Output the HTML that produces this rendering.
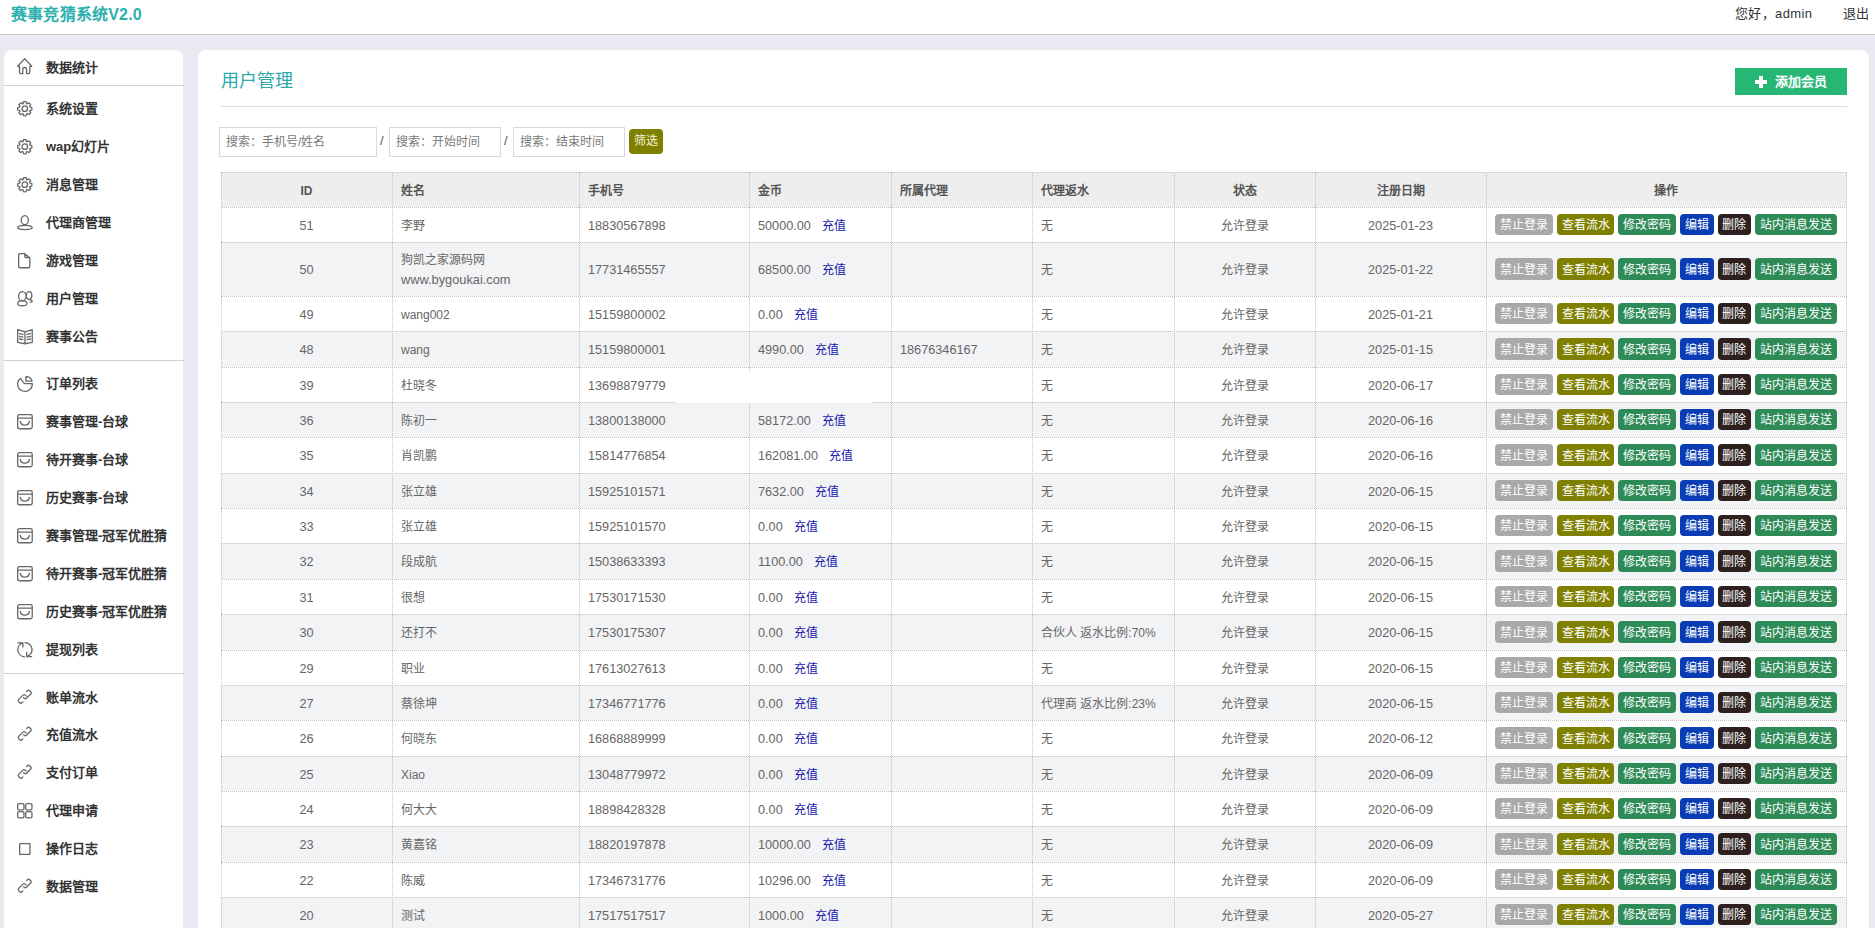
<!DOCTYPE html>
<html lang="zh-CN"><head><meta charset="utf-8"><title>用户管理</title>
<style>
*{box-sizing:border-box;margin:0;padding:0}
html,body{width:1875px;height:928px;overflow:hidden}
body{position:relative;background:#e9e9f2;font-family:"Liberation Sans",sans-serif;color:#333}
.abs{position:absolute}
.hdr{position:absolute;left:0;top:0;width:1875px;height:35px;background:#fff;border-bottom:1px solid #c9c9c9}
.logo{position:absolute;left:11px;top:4.6px;font-size:16px;letter-spacing:0.2px;font-weight:bold;color:#2bb0ae;line-height:20px;white-space:nowrap}
.hr-txt{position:absolute;top:5px;font-size:13px;letter-spacing:0.35px;color:#333;line-height:18px;white-space:nowrap}
.side{position:absolute;left:4px;top:50px;width:179px;height:900px;background:#fff;border-radius:8px 8px 0 0}
.si{position:absolute;left:4px;width:179px;height:20px}
.si svg{position:absolute;left:13px;top:0px}
.si span{position:absolute;left:42px;top:0;line-height:20px;font-size:13px;font-weight:bold;color:#333;white-space:nowrap}
.sep{position:absolute;left:4px;width:180px;height:1px;background:#cfd0d4}
.main{position:absolute;left:198px;top:50px;width:1671px;height:900px;background:#fff;border-radius:8px 8px 0 0}
.title{position:absolute;left:221px;top:70px;font-size:18px;color:#2ba9ab;line-height:22px;white-space:nowrap}
.addbtn{position:absolute;left:1735px;top:68px;width:112px;height:27px;background:#27b775;color:#fff;font-size:13px;font-weight:bold;line-height:27px;white-space:nowrap}
.hrline{position:absolute;left:221px;top:106px;width:1626px;height:1px;background:#dcdcdc}
.inp{position:absolute;top:127px;height:30px;border:1px solid #d6d9e0;background:#fff;font-size:12px;color:#7a7a7a;line-height:28px;padding-left:6px;white-space:nowrap}
.slash{position:absolute;top:132px;font-size:13px;color:#555;line-height:18px}
.filt{position:absolute;left:629px;top:129px;width:34px;height:25px;background:#808000;border-radius:4px;color:#f3f3d8;font-size:12px;line-height:25px;text-align:center}
.rowbg{position:absolute;left:221px;width:1626px}
.hl{position:absolute;left:221px;width:1626px;height:1px;border-top:1px dotted #c2c2c2}
.vl{position:absolute;width:1px;border-left:1px dotted #c2c2c2}
.c{position:absolute;display:flex;align-items:center;padding-top:3px;font-size:12px;color:#666;white-space:nowrap;line-height:19px}
.c.ctr{justify-content:center}
.c.l{padding-left:9px}
.num{font-size:12.7px}
.th{font-weight:bold;color:#555;font-size:12px}
.cz{color:#1616ad;font-size:12px;margin-left:11px}
.ops{position:absolute;display:flex;align-items:center;justify-content:center;gap:4px}
.b{display:block;height:21.5px;line-height:21.5px;padding:1.5px 4.8px 0;font-weight:500;border-radius:4px;color:#fff;font-size:12px;white-space:nowrap}
</style></head><body>

<div class="hdr"></div>
<div class="abs" style="left:0;top:35px;width:1875px;height:2px;background:#eeeef3"></div>
<div class="logo">赛事竞猜系统V2.0</div>
<div class="hr-txt" style="left:1735px">您好，admin</div>
<div class="hr-txt" style="left:1843px">退出</div>
<div class="side"></div>
<svg class="abs" style="left:17.3px;top:57.8px;overflow:visible" width="15.4" height="16.2" viewBox="0 0 15.4 16.2"><path fill="none" stroke="#676767" stroke-width="1.3" stroke-linecap="round" stroke-linejoin="round" d="M2.5 8.5 L0.65 8.3 L7.7 0.65 L14.75 8.3 L12.9 8.5 V14 Q12.9 15.55 11.5 15.55 H9.6 V11 Q9.6 9.5 7.7 9.5 Q5.8 9.5 5.8 11 V15.55 H3.9 Q2.5 15.55 2.5 14 Z"/></svg>
<div class="si" style="top:58px"><span>数据统计</span></div>
<div class="sep" style="top:85px"></div>
<svg class="abs" style="left:17.1px;top:101.1px;overflow:visible" width="15.6" height="15.4" viewBox="0 0 15.6 15.4"><path fill="none" stroke="#676767" stroke-width="1.3" stroke-linecap="round" stroke-linejoin="round" d="M6.13 2.56 L6.41 0.74 A7.1 7.1 0 0 1 9.19 0.74 L9.47 2.56 A5.4 5.4 0 0 1 10.25 2.89 L11.74 1.80 A7.1 7.1 0 0 1 13.70 3.76 L12.61 5.25 A5.4 5.4 0 0 1 12.94 6.03 L14.76 6.31 A7.1 7.1 0 0 1 14.76 9.09 L12.94 9.37 A5.4 5.4 0 0 1 12.61 10.15 L13.70 11.64 A7.1 7.1 0 0 1 11.74 13.60 L10.25 12.51 A5.4 5.4 0 0 1 9.47 12.84 L9.19 14.66 A7.1 7.1 0 0 1 6.41 14.66 L6.13 12.84 A5.4 5.4 0 0 1 5.35 12.51 L3.86 13.60 A7.1 7.1 0 0 1 1.90 11.64 L2.99 10.15 A5.4 5.4 0 0 1 2.66 9.37 L0.84 9.09 A7.1 7.1 0 0 1 0.84 6.31 L2.66 6.03 A5.4 5.4 0 0 1 2.99 5.25 L1.90 3.76 A7.1 7.1 0 0 1 3.86 1.80 L5.35 2.89 A5.4 5.4 0 0 1 6.13 2.56 Z"/><circle cx="7.8" cy="7.7" r="2.75" fill="none" stroke="#676767" stroke-width="1.3" stroke-linecap="round" stroke-linejoin="round"/></svg>
<div class="si" style="top:99px"><span>系统设置</span></div>
<svg class="abs" style="left:17.1px;top:139.1px;overflow:visible" width="15.6" height="15.4" viewBox="0 0 15.6 15.4"><path fill="none" stroke="#676767" stroke-width="1.3" stroke-linecap="round" stroke-linejoin="round" d="M6.13 2.56 L6.41 0.74 A7.1 7.1 0 0 1 9.19 0.74 L9.47 2.56 A5.4 5.4 0 0 1 10.25 2.89 L11.74 1.80 A7.1 7.1 0 0 1 13.70 3.76 L12.61 5.25 A5.4 5.4 0 0 1 12.94 6.03 L14.76 6.31 A7.1 7.1 0 0 1 14.76 9.09 L12.94 9.37 A5.4 5.4 0 0 1 12.61 10.15 L13.70 11.64 A7.1 7.1 0 0 1 11.74 13.60 L10.25 12.51 A5.4 5.4 0 0 1 9.47 12.84 L9.19 14.66 A7.1 7.1 0 0 1 6.41 14.66 L6.13 12.84 A5.4 5.4 0 0 1 5.35 12.51 L3.86 13.60 A7.1 7.1 0 0 1 1.90 11.64 L2.99 10.15 A5.4 5.4 0 0 1 2.66 9.37 L0.84 9.09 A7.1 7.1 0 0 1 0.84 6.31 L2.66 6.03 A5.4 5.4 0 0 1 2.99 5.25 L1.90 3.76 A7.1 7.1 0 0 1 3.86 1.80 L5.35 2.89 A5.4 5.4 0 0 1 6.13 2.56 Z"/><circle cx="7.8" cy="7.7" r="2.75" fill="none" stroke="#676767" stroke-width="1.3" stroke-linecap="round" stroke-linejoin="round"/></svg>
<div class="si" style="top:137px"><span>wap幻灯片</span></div>
<svg class="abs" style="left:17.1px;top:177.1px;overflow:visible" width="15.6" height="15.4" viewBox="0 0 15.6 15.4"><path fill="none" stroke="#676767" stroke-width="1.3" stroke-linecap="round" stroke-linejoin="round" d="M6.13 2.56 L6.41 0.74 A7.1 7.1 0 0 1 9.19 0.74 L9.47 2.56 A5.4 5.4 0 0 1 10.25 2.89 L11.74 1.80 A7.1 7.1 0 0 1 13.70 3.76 L12.61 5.25 A5.4 5.4 0 0 1 12.94 6.03 L14.76 6.31 A7.1 7.1 0 0 1 14.76 9.09 L12.94 9.37 A5.4 5.4 0 0 1 12.61 10.15 L13.70 11.64 A7.1 7.1 0 0 1 11.74 13.60 L10.25 12.51 A5.4 5.4 0 0 1 9.47 12.84 L9.19 14.66 A7.1 7.1 0 0 1 6.41 14.66 L6.13 12.84 A5.4 5.4 0 0 1 5.35 12.51 L3.86 13.60 A7.1 7.1 0 0 1 1.90 11.64 L2.99 10.15 A5.4 5.4 0 0 1 2.66 9.37 L0.84 9.09 A7.1 7.1 0 0 1 0.84 6.31 L2.66 6.03 A5.4 5.4 0 0 1 2.99 5.25 L1.90 3.76 A7.1 7.1 0 0 1 3.86 1.80 L5.35 2.89 A5.4 5.4 0 0 1 6.13 2.56 Z"/><circle cx="7.8" cy="7.7" r="2.75" fill="none" stroke="#676767" stroke-width="1.3" stroke-linecap="round" stroke-linejoin="round"/></svg>
<div class="si" style="top:175px"><span>消息管理</span></div>
<svg class="abs" style="left:17.1px;top:215.1px;overflow:visible" width="15.9" height="15.2" viewBox="0 0 15.9 15.2"><path fill="none" stroke="#676767" stroke-width="1.3" stroke-linecap="round" stroke-linejoin="round" d="M0.65 12.8 C0.65 9.6 15.25 9.6 15.25 12.8 C15.25 15.2 0.65 15.2 0.65 12.8 Z"/><ellipse cx="7.8" cy="5.15" rx="3.6" ry="4.5" fill="#fff" stroke="#676767" stroke-width="1.3" stroke-linecap="round" stroke-linejoin="round"/></svg>
<div class="si" style="top:213px"><span>代理商管理</span></div>
<svg class="abs" style="left:18.3px;top:253.1px;overflow:visible" width="12.5" height="15.4" viewBox="0 0 12.5 15.4"><path fill="none" stroke="#676767" stroke-width="1.3" stroke-linecap="round" stroke-linejoin="round" d="M0.65 1.8 Q0.65 0.65 1.8 0.65 H6.8 L11.85 4.9 V13.6 Q11.85 14.75 10.7 14.75 H1.8 Q0.65 14.75 0.65 13.6 Z M6.8 0.65 V3.6 Q6.8 4.5 7.7 4.5 H11.8"/></svg>
<div class="si" style="top:251px"><span>游戏管理</span></div>
<svg class="abs" style="left:17.1px;top:291.1px;overflow:visible" width="15.9" height="15.4" viewBox="0 0 15.9 15.4"><ellipse cx="12.1" cy="4.5" rx="2.75" ry="3.85" fill="none" stroke="#676767" stroke-width="1.3" stroke-linecap="round" stroke-linejoin="round"/><path fill="none" stroke="#676767" stroke-width="1.3" stroke-linecap="round" stroke-linejoin="round" d="M12.6 8.6 Q15.25 9.1 15.25 10.4 Q15.25 11.2 13.2 11.2"/><path fill="#fff" stroke="#676767" stroke-width="1.3" stroke-linecap="round" stroke-linejoin="round" d="M5.3 9.6 Q0.65 9.9 0.65 12.6 Q0.65 14.75 5.3 14.75 Q10 14.75 10 12.6 Q10 9.9 5.3 9.6 Z"/><ellipse cx="5.3" cy="5.2" rx="3.75" ry="4.55" fill="#fff" stroke="#676767" stroke-width="1.3" stroke-linecap="round" stroke-linejoin="round"/></svg>
<div class="si" style="top:289px"><span>用户管理</span></div>
<svg class="abs" style="left:17.1px;top:329.1px;overflow:visible" width="15.9" height="15.4" viewBox="0 0 15.9 15.4"><path fill="none" stroke="#676767" stroke-width="1.3" stroke-linecap="round" stroke-linejoin="round" d="M0.65 0.65 L7.95 2.9 L15.25 0.65 V13.4 L7.95 14.75 L0.65 13.4 Z M7.95 2.9 V14.75 M2.4 4.7 L5.9 5.4 M2.4 7.4 L5.9 8.1 M2.4 10 L5.9 10.7 M10 5.4 L13.5 4.7 M10 8.1 L13.5 7.4 M10 10.7 L13.5 10"/></svg>
<div class="si" style="top:327px"><span>赛事公告</span></div>
<div class="sep" style="top:360px"></div>
<svg class="abs" style="left:17.1px;top:375.9px;overflow:visible" width="15.9" height="15.9" viewBox="0 0 15.9 15.9"><path fill="none" stroke="#676767" stroke-width="1.3" stroke-linecap="round" stroke-linejoin="round" d="M3.4 2.4 L7.5 7.55 H15.25 A7.3 7.3 0 1 1 3.4 2.4 Z"/><path fill="none" stroke="#676767" stroke-width="1.3" stroke-linecap="round" stroke-linejoin="round" d="M8.9 0.7 V5.1 H15.2 A6.6 6.6 0 0 0 8.9 0.7 Z"/></svg>
<div class="si" style="top:374px"><span>订单列表</span></div>
<svg class="abs" style="left:17.1px;top:414.1px;overflow:visible" width="15.9" height="15.4" viewBox="0 0 15.9 15.4"><path fill="none" stroke="#676767" stroke-width="1.3" stroke-linecap="round" stroke-linejoin="round" d="M2.4 0.65 H13.5 Q15.25 0.65 15.25 2.4 V13 Q15.25 14.75 13.5 14.75 H2.4 Q0.65 14.75 0.65 13 V2.4 Q0.65 0.65 2.4 0.65 Z M0.65 4.2 H15.25 M3.3 7.4 C3.8 12.3 11.9 12.3 12.4 7.4"/></svg>
<div class="si" style="top:412px"><span>赛事管理-台球</span></div>
<svg class="abs" style="left:17.1px;top:452.1px;overflow:visible" width="15.9" height="15.4" viewBox="0 0 15.9 15.4"><path fill="none" stroke="#676767" stroke-width="1.3" stroke-linecap="round" stroke-linejoin="round" d="M2.4 0.65 H13.5 Q15.25 0.65 15.25 2.4 V13 Q15.25 14.75 13.5 14.75 H2.4 Q0.65 14.75 0.65 13 V2.4 Q0.65 0.65 2.4 0.65 Z M0.65 4.2 H15.25 M3.3 7.4 C3.8 12.3 11.9 12.3 12.4 7.4"/></svg>
<div class="si" style="top:450px"><span>待开赛事-台球</span></div>
<svg class="abs" style="left:17.1px;top:490.1px;overflow:visible" width="15.9" height="15.4" viewBox="0 0 15.9 15.4"><path fill="none" stroke="#676767" stroke-width="1.3" stroke-linecap="round" stroke-linejoin="round" d="M2.4 0.65 H13.5 Q15.25 0.65 15.25 2.4 V13 Q15.25 14.75 13.5 14.75 H2.4 Q0.65 14.75 0.65 13 V2.4 Q0.65 0.65 2.4 0.65 Z M0.65 4.2 H15.25 M3.3 7.4 C3.8 12.3 11.9 12.3 12.4 7.4"/></svg>
<div class="si" style="top:488px"><span>历史赛事-台球</span></div>
<svg class="abs" style="left:17.1px;top:528.1px;overflow:visible" width="15.9" height="15.4" viewBox="0 0 15.9 15.4"><path fill="none" stroke="#676767" stroke-width="1.3" stroke-linecap="round" stroke-linejoin="round" d="M2.4 0.65 H13.5 Q15.25 0.65 15.25 2.4 V13 Q15.25 14.75 13.5 14.75 H2.4 Q0.65 14.75 0.65 13 V2.4 Q0.65 0.65 2.4 0.65 Z M0.65 4.2 H15.25 M3.3 7.4 C3.8 12.3 11.9 12.3 12.4 7.4"/></svg>
<div class="si" style="top:526px"><span>赛事管理-冠军优胜猜</span></div>
<svg class="abs" style="left:17.1px;top:566.1px;overflow:visible" width="15.9" height="15.4" viewBox="0 0 15.9 15.4"><path fill="none" stroke="#676767" stroke-width="1.3" stroke-linecap="round" stroke-linejoin="round" d="M2.4 0.65 H13.5 Q15.25 0.65 15.25 2.4 V13 Q15.25 14.75 13.5 14.75 H2.4 Q0.65 14.75 0.65 13 V2.4 Q0.65 0.65 2.4 0.65 Z M0.65 4.2 H15.25 M3.3 7.4 C3.8 12.3 11.9 12.3 12.4 7.4"/></svg>
<div class="si" style="top:564px"><span>待开赛事-冠军优胜猜</span></div>
<svg class="abs" style="left:17.1px;top:604.1px;overflow:visible" width="15.9" height="15.4" viewBox="0 0 15.9 15.4"><path fill="none" stroke="#676767" stroke-width="1.3" stroke-linecap="round" stroke-linejoin="round" d="M2.4 0.65 H13.5 Q15.25 0.65 15.25 2.4 V13 Q15.25 14.75 13.5 14.75 H2.4 Q0.65 14.75 0.65 13 V2.4 Q0.65 0.65 2.4 0.65 Z M0.65 4.2 H15.25 M3.3 7.4 C3.8 12.3 11.9 12.3 12.4 7.4"/></svg>
<div class="si" style="top:602px"><span>历史赛事-冠军优胜猜</span></div>
<svg class="abs" style="left:17.1px;top:642.1px;overflow:visible" width="15.9" height="15.4" viewBox="0 0 15.9 15.4"><path fill="none" stroke="#676767" stroke-width="1.3" stroke-linecap="round" stroke-linejoin="round" d="M5.9 0.9 A7.1 7.1 0 0 0 7.6 14.79 M0.9 0.9 H5.9 V4.9 M8 0.6 A7.1 7.1 0 0 1 9.7 14.58 M9.7 10.5 V14.58 H14.7"/></svg>
<div class="si" style="top:640px"><span>提现列表</span></div>
<div class="sep" style="top:673px"></div>
<svg class="abs" style="left:17.1px;top:689.1px;overflow:visible" width="15.9" height="15.4" viewBox="0 0 15.9 15.4"><g transform="translate(7.9 7.9) rotate(-45)"><path fill="none" stroke="#676767" stroke-width="1.3" stroke-linecap="round" stroke-linejoin="round" d="M4.9 -2.6 H6.1 Q7.7 -2.6 7.7 -1 V0.5 Q7.7 2.1 6.1 2.1 H0.1 Q-1.5 2.1 -1.5 0.5 V-0.5 M-4.9 2.1 H-6.1 Q-7.7 2.1 -7.7 0.5 V-1 Q-7.7 -2.6 -6.1 -2.6 H-0.1 Q1.5 -2.6 1.5 -1 V0.2"/></g></svg>
<div class="si" style="top:688px"><span>账单流水</span></div>
<svg class="abs" style="left:17.1px;top:726.1px;overflow:visible" width="15.9" height="15.4" viewBox="0 0 15.9 15.4"><g transform="translate(7.9 7.9) rotate(-45)"><path fill="none" stroke="#676767" stroke-width="1.3" stroke-linecap="round" stroke-linejoin="round" d="M4.9 -2.6 H6.1 Q7.7 -2.6 7.7 -1 V0.5 Q7.7 2.1 6.1 2.1 H0.1 Q-1.5 2.1 -1.5 0.5 V-0.5 M-4.9 2.1 H-6.1 Q-7.7 2.1 -7.7 0.5 V-1 Q-7.7 -2.6 -6.1 -2.6 H-0.1 Q1.5 -2.6 1.5 -1 V0.2"/></g></svg>
<div class="si" style="top:725px"><span>充值流水</span></div>
<svg class="abs" style="left:17.1px;top:764.1px;overflow:visible" width="15.9" height="15.4" viewBox="0 0 15.9 15.4"><g transform="translate(7.9 7.9) rotate(-45)"><path fill="none" stroke="#676767" stroke-width="1.3" stroke-linecap="round" stroke-linejoin="round" d="M4.9 -2.6 H6.1 Q7.7 -2.6 7.7 -1 V0.5 Q7.7 2.1 6.1 2.1 H0.1 Q-1.5 2.1 -1.5 0.5 V-0.5 M-4.9 2.1 H-6.1 Q-7.7 2.1 -7.7 0.5 V-1 Q-7.7 -2.6 -6.1 -2.6 H-0.1 Q1.5 -2.6 1.5 -1 V0.2"/></g></svg>
<div class="si" style="top:763px"><span>支付订单</span></div>
<svg class="abs" style="left:17.2px;top:803.2px;overflow:visible" width="15.6" height="15.6" viewBox="0 0 15.6 15.6"><rect x="0.65" y="0.65" width="6.3" height="6.3" rx="1.4" fill="none" stroke="#676767" stroke-width="1.3" stroke-linecap="round" stroke-linejoin="round"/><rect x="8.65" y="0.65" width="6.3" height="6.3" rx="1.4" fill="none" stroke="#676767" stroke-width="1.3" stroke-linecap="round" stroke-linejoin="round"/><rect x="0.65" y="8.65" width="6.3" height="6.3" rx="1.4" fill="none" stroke="#676767" stroke-width="1.3" stroke-linecap="round" stroke-linejoin="round"/><rect x="8.65" y="8.65" width="6.3" height="6.3" rx="1.4" fill="none" stroke="#676767" stroke-width="1.3" stroke-linecap="round" stroke-linejoin="round"/></svg>
<div class="si" style="top:801px"><span>代理申请</span></div>
<svg class="abs" style="left:19.2px;top:843px;overflow:visible" width="11.6" height="12" viewBox="0 0 11.6 12"><rect x="0.65" y="0.65" width="10.3" height="10.7" fill="none" stroke="#676767" stroke-width="1.3" stroke-linecap="round" stroke-linejoin="round"/></svg>
<div class="si" style="top:839px"><span>操作日志</span></div>
<svg class="abs" style="left:17.1px;top:878.1px;overflow:visible" width="15.9" height="15.4" viewBox="0 0 15.9 15.4"><g transform="translate(7.9 7.9) rotate(-45)"><path fill="none" stroke="#676767" stroke-width="1.3" stroke-linecap="round" stroke-linejoin="round" d="M4.9 -2.6 H6.1 Q7.7 -2.6 7.7 -1 V0.5 Q7.7 2.1 6.1 2.1 H0.1 Q-1.5 2.1 -1.5 0.5 V-0.5 M-4.9 2.1 H-6.1 Q-7.7 2.1 -7.7 0.5 V-1 Q-7.7 -2.6 -6.1 -2.6 H-0.1 Q1.5 -2.6 1.5 -1 V0.2"/></g></svg>
<div class="si" style="top:877px"><span>数据管理</span></div>
<div class="main"></div>
<div class="title">用户管理</div>
<div class="addbtn"><svg class="abs" style="left:20px;top:8px" width="12" height="12" viewBox="0 0 12 12"><path d="M4 0H8V4H12V8H8V12H4V8H0V4H4Z" fill="#fff"/></svg><span class="abs" style="left:40px;top:0">添加会员</span></div>
<div class="hrline"></div>
<div class="inp" style="left:219px;width:158px">搜索：手机号/姓名</div>
<div class="slash" style="left:380px">/</div>
<div class="inp" style="left:389px;width:112px">搜索：开始时间</div>
<div class="slash" style="left:504px">/</div>
<div class="inp" style="left:513px;width:112px">搜索：结束时间</div>
<div class="filt">筛选</div>
<div class="rowbg" style="top:172px;height:35px;background:#eeeeee"></div>
<div class="rowbg" style="top:207px;height:35px;background:#ffffff"></div>
<div class="rowbg" style="top:242px;height:54px;background:#f2f3f5"></div>
<div class="rowbg" style="top:296px;height:35px;background:#ffffff"></div>
<div class="rowbg" style="top:331px;height:36px;background:#f2f3f5"></div>
<div class="rowbg" style="top:367px;height:35px;background:#ffffff"></div>
<div class="rowbg" style="top:402px;height:35px;background:#f2f3f5"></div>
<div class="rowbg" style="top:437px;height:36px;background:#ffffff"></div>
<div class="rowbg" style="top:473px;height:35px;background:#f2f3f5"></div>
<div class="rowbg" style="top:508px;height:35px;background:#ffffff"></div>
<div class="rowbg" style="top:543px;height:36px;background:#f2f3f5"></div>
<div class="rowbg" style="top:579px;height:35px;background:#ffffff"></div>
<div class="rowbg" style="top:614px;height:36px;background:#f2f3f5"></div>
<div class="rowbg" style="top:650px;height:35px;background:#ffffff"></div>
<div class="rowbg" style="top:685px;height:35px;background:#f2f3f5"></div>
<div class="rowbg" style="top:720px;height:36px;background:#ffffff"></div>
<div class="rowbg" style="top:756px;height:35px;background:#f2f3f5"></div>
<div class="rowbg" style="top:791px;height:35px;background:#ffffff"></div>
<div class="rowbg" style="top:826px;height:36px;background:#f2f3f5"></div>
<div class="rowbg" style="top:862px;height:35px;background:#ffffff"></div>
<div class="rowbg" style="top:897px;height:35px;background:#f2f3f5"></div>
<div class="c ctr" style="left:221px;top:172px;width:171px;height:35px"><span class="th">ID</span></div>
<div class="c l" style="left:392px;top:172px;width:187px;height:35px"><span class="th">姓名</span></div>
<div class="c l" style="left:579px;top:172px;width:170px;height:35px"><span class="th">手机号</span></div>
<div class="c l" style="left:749px;top:172px;width:142px;height:35px"><span class="th">金币</span></div>
<div class="c l" style="left:891px;top:172px;width:141px;height:35px"><span class="th">所属代理</span></div>
<div class="c l" style="left:1032px;top:172px;width:142px;height:35px"><span class="th">代理返水</span></div>
<div class="c ctr" style="left:1174px;top:172px;width:141px;height:35px"><span class="th">状态</span></div>
<div class="c ctr" style="left:1315px;top:172px;width:171px;height:35px"><span class="th">注册日期</span></div>
<div class="c ctr" style="left:1486px;top:172px;width:360px;height:35px"><span class="th">操作</span></div>
<div class="c ctr" style="left:221px;top:207px;width:171px;height:35px"><span class="num">51</span></div>
<div class="c l" style="left:392px;top:207px;width:187px;height:35px"><span>李野</span></div>
<div class="c l" style="left:579px;top:207px;width:170px;height:35px"><span class="num">18830567898</span></div>
<div class="c l" style="left:749px;top:207px;width:142px;height:35px"><span class="num">50000.00</span><span class="cz">充值</span></div>
<div class="c l" style="left:1032px;top:207px;width:142px;height:35px"><span>无</span></div>
<div class="c ctr" style="left:1174px;top:207px;width:141px;height:35px"><span>允许登录</span></div>
<div class="c ctr" style="left:1315px;top:207px;width:171px;height:35px"><span class="num">2025-01-23</span></div>
<div class="ops" style="left:1486px;top:207px;width:360px;height:35px"><span class="b" style="background:#a9a9a9">禁止登录</span><span class="b" style="background:#808000">查看流水</span><span class="b" style="background:#2e8b57">修改密码</span><span class="b" style="background:#0a3cb4">编辑</span><span class="b" style="background:#2d201f">删除</span><span class="b" style="background:#2e8b57">站内消息发送</span></div>
<div class="c ctr" style="left:221px;top:242px;width:171px;height:54px"><span class="num">50</span></div>
<div class="c l" style="left:392px;top:242px;width:187px;height:54px"><span>狗凯之家源码网<br><span style="font-size:12.8px">www.bygoukai.com</span></span></div>
<div class="c l" style="left:579px;top:242px;width:170px;height:54px"><span class="num">17731465557</span></div>
<div class="c l" style="left:749px;top:242px;width:142px;height:54px"><span class="num">68500.00</span><span class="cz">充值</span></div>
<div class="c l" style="left:1032px;top:242px;width:142px;height:54px"><span>无</span></div>
<div class="c ctr" style="left:1174px;top:242px;width:141px;height:54px"><span>允许登录</span></div>
<div class="c ctr" style="left:1315px;top:242px;width:171px;height:54px"><span class="num">2025-01-22</span></div>
<div class="ops" style="left:1486px;top:242px;width:360px;height:54px"><span class="b" style="background:#a9a9a9">禁止登录</span><span class="b" style="background:#808000">查看流水</span><span class="b" style="background:#2e8b57">修改密码</span><span class="b" style="background:#0a3cb4">编辑</span><span class="b" style="background:#2d201f">删除</span><span class="b" style="background:#2e8b57">站内消息发送</span></div>
<div class="c ctr" style="left:221px;top:296px;width:171px;height:35px"><span class="num">49</span></div>
<div class="c l" style="left:392px;top:296px;width:187px;height:35px"><span>wang002</span></div>
<div class="c l" style="left:579px;top:296px;width:170px;height:35px"><span class="num">15159800002</span></div>
<div class="c l" style="left:749px;top:296px;width:142px;height:35px"><span class="num">0.00</span><span class="cz">充值</span></div>
<div class="c l" style="left:1032px;top:296px;width:142px;height:35px"><span>无</span></div>
<div class="c ctr" style="left:1174px;top:296px;width:141px;height:35px"><span>允许登录</span></div>
<div class="c ctr" style="left:1315px;top:296px;width:171px;height:35px"><span class="num">2025-01-21</span></div>
<div class="ops" style="left:1486px;top:296px;width:360px;height:35px"><span class="b" style="background:#a9a9a9">禁止登录</span><span class="b" style="background:#808000">查看流水</span><span class="b" style="background:#2e8b57">修改密码</span><span class="b" style="background:#0a3cb4">编辑</span><span class="b" style="background:#2d201f">删除</span><span class="b" style="background:#2e8b57">站内消息发送</span></div>
<div class="c ctr" style="left:221px;top:331px;width:171px;height:36px"><span class="num">48</span></div>
<div class="c l" style="left:392px;top:331px;width:187px;height:36px"><span>wang</span></div>
<div class="c l" style="left:579px;top:331px;width:170px;height:36px"><span class="num">15159800001</span></div>
<div class="c l" style="left:749px;top:331px;width:142px;height:36px"><span class="num">4990.00</span><span class="cz">充值</span></div>
<div class="c l" style="left:891px;top:331px;width:141px;height:36px"><span class="num">18676346167</span></div>
<div class="c l" style="left:1032px;top:331px;width:142px;height:36px"><span>无</span></div>
<div class="c ctr" style="left:1174px;top:331px;width:141px;height:36px"><span>允许登录</span></div>
<div class="c ctr" style="left:1315px;top:331px;width:171px;height:36px"><span class="num">2025-01-15</span></div>
<div class="ops" style="left:1486px;top:331px;width:360px;height:36px"><span class="b" style="background:#a9a9a9">禁止登录</span><span class="b" style="background:#808000">查看流水</span><span class="b" style="background:#2e8b57">修改密码</span><span class="b" style="background:#0a3cb4">编辑</span><span class="b" style="background:#2d201f">删除</span><span class="b" style="background:#2e8b57">站内消息发送</span></div>
<div class="c ctr" style="left:221px;top:367px;width:171px;height:35px"><span class="num">39</span></div>
<div class="c l" style="left:392px;top:367px;width:187px;height:35px"><span>杜晓冬</span></div>
<div class="c l" style="left:579px;top:367px;width:170px;height:35px"><span class="num">13698879779</span></div>
<div class="c l" style="left:1032px;top:367px;width:142px;height:35px"><span>无</span></div>
<div class="c ctr" style="left:1174px;top:367px;width:141px;height:35px"><span>允许登录</span></div>
<div class="c ctr" style="left:1315px;top:367px;width:171px;height:35px"><span class="num">2020-06-17</span></div>
<div class="ops" style="left:1486px;top:367px;width:360px;height:35px"><span class="b" style="background:#a9a9a9">禁止登录</span><span class="b" style="background:#808000">查看流水</span><span class="b" style="background:#2e8b57">修改密码</span><span class="b" style="background:#0a3cb4">编辑</span><span class="b" style="background:#2d201f">删除</span><span class="b" style="background:#2e8b57">站内消息发送</span></div>
<div class="c ctr" style="left:221px;top:402px;width:171px;height:35px"><span class="num">36</span></div>
<div class="c l" style="left:392px;top:402px;width:187px;height:35px"><span>陈初一</span></div>
<div class="c l" style="left:579px;top:402px;width:170px;height:35px"><span class="num">13800138000</span></div>
<div class="c l" style="left:749px;top:402px;width:142px;height:35px"><span class="num">58172.00</span><span class="cz">充值</span></div>
<div class="c l" style="left:1032px;top:402px;width:142px;height:35px"><span>无</span></div>
<div class="c ctr" style="left:1174px;top:402px;width:141px;height:35px"><span>允许登录</span></div>
<div class="c ctr" style="left:1315px;top:402px;width:171px;height:35px"><span class="num">2020-06-16</span></div>
<div class="ops" style="left:1486px;top:402px;width:360px;height:35px"><span class="b" style="background:#a9a9a9">禁止登录</span><span class="b" style="background:#808000">查看流水</span><span class="b" style="background:#2e8b57">修改密码</span><span class="b" style="background:#0a3cb4">编辑</span><span class="b" style="background:#2d201f">删除</span><span class="b" style="background:#2e8b57">站内消息发送</span></div>
<div class="c ctr" style="left:221px;top:437px;width:171px;height:36px"><span class="num">35</span></div>
<div class="c l" style="left:392px;top:437px;width:187px;height:36px"><span>肖凯鹏</span></div>
<div class="c l" style="left:579px;top:437px;width:170px;height:36px"><span class="num">15814776854</span></div>
<div class="c l" style="left:749px;top:437px;width:142px;height:36px"><span class="num">162081.00</span><span class="cz">充值</span></div>
<div class="c l" style="left:1032px;top:437px;width:142px;height:36px"><span>无</span></div>
<div class="c ctr" style="left:1174px;top:437px;width:141px;height:36px"><span>允许登录</span></div>
<div class="c ctr" style="left:1315px;top:437px;width:171px;height:36px"><span class="num">2020-06-16</span></div>
<div class="ops" style="left:1486px;top:437px;width:360px;height:36px"><span class="b" style="background:#a9a9a9">禁止登录</span><span class="b" style="background:#808000">查看流水</span><span class="b" style="background:#2e8b57">修改密码</span><span class="b" style="background:#0a3cb4">编辑</span><span class="b" style="background:#2d201f">删除</span><span class="b" style="background:#2e8b57">站内消息发送</span></div>
<div class="c ctr" style="left:221px;top:473px;width:171px;height:35px"><span class="num">34</span></div>
<div class="c l" style="left:392px;top:473px;width:187px;height:35px"><span>张立雄</span></div>
<div class="c l" style="left:579px;top:473px;width:170px;height:35px"><span class="num">15925101571</span></div>
<div class="c l" style="left:749px;top:473px;width:142px;height:35px"><span class="num">7632.00</span><span class="cz">充值</span></div>
<div class="c l" style="left:1032px;top:473px;width:142px;height:35px"><span>无</span></div>
<div class="c ctr" style="left:1174px;top:473px;width:141px;height:35px"><span>允许登录</span></div>
<div class="c ctr" style="left:1315px;top:473px;width:171px;height:35px"><span class="num">2020-06-15</span></div>
<div class="ops" style="left:1486px;top:473px;width:360px;height:35px"><span class="b" style="background:#a9a9a9">禁止登录</span><span class="b" style="background:#808000">查看流水</span><span class="b" style="background:#2e8b57">修改密码</span><span class="b" style="background:#0a3cb4">编辑</span><span class="b" style="background:#2d201f">删除</span><span class="b" style="background:#2e8b57">站内消息发送</span></div>
<div class="c ctr" style="left:221px;top:508px;width:171px;height:35px"><span class="num">33</span></div>
<div class="c l" style="left:392px;top:508px;width:187px;height:35px"><span>张立雄</span></div>
<div class="c l" style="left:579px;top:508px;width:170px;height:35px"><span class="num">15925101570</span></div>
<div class="c l" style="left:749px;top:508px;width:142px;height:35px"><span class="num">0.00</span><span class="cz">充值</span></div>
<div class="c l" style="left:1032px;top:508px;width:142px;height:35px"><span>无</span></div>
<div class="c ctr" style="left:1174px;top:508px;width:141px;height:35px"><span>允许登录</span></div>
<div class="c ctr" style="left:1315px;top:508px;width:171px;height:35px"><span class="num">2020-06-15</span></div>
<div class="ops" style="left:1486px;top:508px;width:360px;height:35px"><span class="b" style="background:#a9a9a9">禁止登录</span><span class="b" style="background:#808000">查看流水</span><span class="b" style="background:#2e8b57">修改密码</span><span class="b" style="background:#0a3cb4">编辑</span><span class="b" style="background:#2d201f">删除</span><span class="b" style="background:#2e8b57">站内消息发送</span></div>
<div class="c ctr" style="left:221px;top:543px;width:171px;height:36px"><span class="num">32</span></div>
<div class="c l" style="left:392px;top:543px;width:187px;height:36px"><span>段成航</span></div>
<div class="c l" style="left:579px;top:543px;width:170px;height:36px"><span class="num">15038633393</span></div>
<div class="c l" style="left:749px;top:543px;width:142px;height:36px"><span class="num">1100.00</span><span class="cz">充值</span></div>
<div class="c l" style="left:1032px;top:543px;width:142px;height:36px"><span>无</span></div>
<div class="c ctr" style="left:1174px;top:543px;width:141px;height:36px"><span>允许登录</span></div>
<div class="c ctr" style="left:1315px;top:543px;width:171px;height:36px"><span class="num">2020-06-15</span></div>
<div class="ops" style="left:1486px;top:543px;width:360px;height:36px"><span class="b" style="background:#a9a9a9">禁止登录</span><span class="b" style="background:#808000">查看流水</span><span class="b" style="background:#2e8b57">修改密码</span><span class="b" style="background:#0a3cb4">编辑</span><span class="b" style="background:#2d201f">删除</span><span class="b" style="background:#2e8b57">站内消息发送</span></div>
<div class="c ctr" style="left:221px;top:579px;width:171px;height:35px"><span class="num">31</span></div>
<div class="c l" style="left:392px;top:579px;width:187px;height:35px"><span>很想</span></div>
<div class="c l" style="left:579px;top:579px;width:170px;height:35px"><span class="num">17530171530</span></div>
<div class="c l" style="left:749px;top:579px;width:142px;height:35px"><span class="num">0.00</span><span class="cz">充值</span></div>
<div class="c l" style="left:1032px;top:579px;width:142px;height:35px"><span>无</span></div>
<div class="c ctr" style="left:1174px;top:579px;width:141px;height:35px"><span>允许登录</span></div>
<div class="c ctr" style="left:1315px;top:579px;width:171px;height:35px"><span class="num">2020-06-15</span></div>
<div class="ops" style="left:1486px;top:579px;width:360px;height:35px"><span class="b" style="background:#a9a9a9">禁止登录</span><span class="b" style="background:#808000">查看流水</span><span class="b" style="background:#2e8b57">修改密码</span><span class="b" style="background:#0a3cb4">编辑</span><span class="b" style="background:#2d201f">删除</span><span class="b" style="background:#2e8b57">站内消息发送</span></div>
<div class="c ctr" style="left:221px;top:614px;width:171px;height:36px"><span class="num">30</span></div>
<div class="c l" style="left:392px;top:614px;width:187px;height:36px"><span>还打不</span></div>
<div class="c l" style="left:579px;top:614px;width:170px;height:36px"><span class="num">17530175307</span></div>
<div class="c l" style="left:749px;top:614px;width:142px;height:36px"><span class="num">0.00</span><span class="cz">充值</span></div>
<div class="c l" style="left:1032px;top:614px;width:142px;height:36px"><span>合伙人 返水比例:70%</span></div>
<div class="c ctr" style="left:1174px;top:614px;width:141px;height:36px"><span>允许登录</span></div>
<div class="c ctr" style="left:1315px;top:614px;width:171px;height:36px"><span class="num">2020-06-15</span></div>
<div class="ops" style="left:1486px;top:614px;width:360px;height:36px"><span class="b" style="background:#a9a9a9">禁止登录</span><span class="b" style="background:#808000">查看流水</span><span class="b" style="background:#2e8b57">修改密码</span><span class="b" style="background:#0a3cb4">编辑</span><span class="b" style="background:#2d201f">删除</span><span class="b" style="background:#2e8b57">站内消息发送</span></div>
<div class="c ctr" style="left:221px;top:650px;width:171px;height:35px"><span class="num">29</span></div>
<div class="c l" style="left:392px;top:650px;width:187px;height:35px"><span>职业</span></div>
<div class="c l" style="left:579px;top:650px;width:170px;height:35px"><span class="num">17613027613</span></div>
<div class="c l" style="left:749px;top:650px;width:142px;height:35px"><span class="num">0.00</span><span class="cz">充值</span></div>
<div class="c l" style="left:1032px;top:650px;width:142px;height:35px"><span>无</span></div>
<div class="c ctr" style="left:1174px;top:650px;width:141px;height:35px"><span>允许登录</span></div>
<div class="c ctr" style="left:1315px;top:650px;width:171px;height:35px"><span class="num">2020-06-15</span></div>
<div class="ops" style="left:1486px;top:650px;width:360px;height:35px"><span class="b" style="background:#a9a9a9">禁止登录</span><span class="b" style="background:#808000">查看流水</span><span class="b" style="background:#2e8b57">修改密码</span><span class="b" style="background:#0a3cb4">编辑</span><span class="b" style="background:#2d201f">删除</span><span class="b" style="background:#2e8b57">站内消息发送</span></div>
<div class="c ctr" style="left:221px;top:685px;width:171px;height:35px"><span class="num">27</span></div>
<div class="c l" style="left:392px;top:685px;width:187px;height:35px"><span>蔡徐坤</span></div>
<div class="c l" style="left:579px;top:685px;width:170px;height:35px"><span class="num">17346771776</span></div>
<div class="c l" style="left:749px;top:685px;width:142px;height:35px"><span class="num">0.00</span><span class="cz">充值</span></div>
<div class="c l" style="left:1032px;top:685px;width:142px;height:35px"><span>代理商 返水比例:23%</span></div>
<div class="c ctr" style="left:1174px;top:685px;width:141px;height:35px"><span>允许登录</span></div>
<div class="c ctr" style="left:1315px;top:685px;width:171px;height:35px"><span class="num">2020-06-15</span></div>
<div class="ops" style="left:1486px;top:685px;width:360px;height:35px"><span class="b" style="background:#a9a9a9">禁止登录</span><span class="b" style="background:#808000">查看流水</span><span class="b" style="background:#2e8b57">修改密码</span><span class="b" style="background:#0a3cb4">编辑</span><span class="b" style="background:#2d201f">删除</span><span class="b" style="background:#2e8b57">站内消息发送</span></div>
<div class="c ctr" style="left:221px;top:720px;width:171px;height:36px"><span class="num">26</span></div>
<div class="c l" style="left:392px;top:720px;width:187px;height:36px"><span>何晓东</span></div>
<div class="c l" style="left:579px;top:720px;width:170px;height:36px"><span class="num">16868889999</span></div>
<div class="c l" style="left:749px;top:720px;width:142px;height:36px"><span class="num">0.00</span><span class="cz">充值</span></div>
<div class="c l" style="left:1032px;top:720px;width:142px;height:36px"><span>无</span></div>
<div class="c ctr" style="left:1174px;top:720px;width:141px;height:36px"><span>允许登录</span></div>
<div class="c ctr" style="left:1315px;top:720px;width:171px;height:36px"><span class="num">2020-06-12</span></div>
<div class="ops" style="left:1486px;top:720px;width:360px;height:36px"><span class="b" style="background:#a9a9a9">禁止登录</span><span class="b" style="background:#808000">查看流水</span><span class="b" style="background:#2e8b57">修改密码</span><span class="b" style="background:#0a3cb4">编辑</span><span class="b" style="background:#2d201f">删除</span><span class="b" style="background:#2e8b57">站内消息发送</span></div>
<div class="c ctr" style="left:221px;top:756px;width:171px;height:35px"><span class="num">25</span></div>
<div class="c l" style="left:392px;top:756px;width:187px;height:35px"><span>Xiao</span></div>
<div class="c l" style="left:579px;top:756px;width:170px;height:35px"><span class="num">13048779972</span></div>
<div class="c l" style="left:749px;top:756px;width:142px;height:35px"><span class="num">0.00</span><span class="cz">充值</span></div>
<div class="c l" style="left:1032px;top:756px;width:142px;height:35px"><span>无</span></div>
<div class="c ctr" style="left:1174px;top:756px;width:141px;height:35px"><span>允许登录</span></div>
<div class="c ctr" style="left:1315px;top:756px;width:171px;height:35px"><span class="num">2020-06-09</span></div>
<div class="ops" style="left:1486px;top:756px;width:360px;height:35px"><span class="b" style="background:#a9a9a9">禁止登录</span><span class="b" style="background:#808000">查看流水</span><span class="b" style="background:#2e8b57">修改密码</span><span class="b" style="background:#0a3cb4">编辑</span><span class="b" style="background:#2d201f">删除</span><span class="b" style="background:#2e8b57">站内消息发送</span></div>
<div class="c ctr" style="left:221px;top:791px;width:171px;height:35px"><span class="num">24</span></div>
<div class="c l" style="left:392px;top:791px;width:187px;height:35px"><span>何大大</span></div>
<div class="c l" style="left:579px;top:791px;width:170px;height:35px"><span class="num">18898428328</span></div>
<div class="c l" style="left:749px;top:791px;width:142px;height:35px"><span class="num">0.00</span><span class="cz">充值</span></div>
<div class="c l" style="left:1032px;top:791px;width:142px;height:35px"><span>无</span></div>
<div class="c ctr" style="left:1174px;top:791px;width:141px;height:35px"><span>允许登录</span></div>
<div class="c ctr" style="left:1315px;top:791px;width:171px;height:35px"><span class="num">2020-06-09</span></div>
<div class="ops" style="left:1486px;top:791px;width:360px;height:35px"><span class="b" style="background:#a9a9a9">禁止登录</span><span class="b" style="background:#808000">查看流水</span><span class="b" style="background:#2e8b57">修改密码</span><span class="b" style="background:#0a3cb4">编辑</span><span class="b" style="background:#2d201f">删除</span><span class="b" style="background:#2e8b57">站内消息发送</span></div>
<div class="c ctr" style="left:221px;top:826px;width:171px;height:36px"><span class="num">23</span></div>
<div class="c l" style="left:392px;top:826px;width:187px;height:36px"><span>黄嘉铭</span></div>
<div class="c l" style="left:579px;top:826px;width:170px;height:36px"><span class="num">18820197878</span></div>
<div class="c l" style="left:749px;top:826px;width:142px;height:36px"><span class="num">10000.00</span><span class="cz">充值</span></div>
<div class="c l" style="left:1032px;top:826px;width:142px;height:36px"><span>无</span></div>
<div class="c ctr" style="left:1174px;top:826px;width:141px;height:36px"><span>允许登录</span></div>
<div class="c ctr" style="left:1315px;top:826px;width:171px;height:36px"><span class="num">2020-06-09</span></div>
<div class="ops" style="left:1486px;top:826px;width:360px;height:36px"><span class="b" style="background:#a9a9a9">禁止登录</span><span class="b" style="background:#808000">查看流水</span><span class="b" style="background:#2e8b57">修改密码</span><span class="b" style="background:#0a3cb4">编辑</span><span class="b" style="background:#2d201f">删除</span><span class="b" style="background:#2e8b57">站内消息发送</span></div>
<div class="c ctr" style="left:221px;top:862px;width:171px;height:35px"><span class="num">22</span></div>
<div class="c l" style="left:392px;top:862px;width:187px;height:35px"><span>陈威</span></div>
<div class="c l" style="left:579px;top:862px;width:170px;height:35px"><span class="num">17346731776</span></div>
<div class="c l" style="left:749px;top:862px;width:142px;height:35px"><span class="num">10296.00</span><span class="cz">充值</span></div>
<div class="c l" style="left:1032px;top:862px;width:142px;height:35px"><span>无</span></div>
<div class="c ctr" style="left:1174px;top:862px;width:141px;height:35px"><span>允许登录</span></div>
<div class="c ctr" style="left:1315px;top:862px;width:171px;height:35px"><span class="num">2020-06-09</span></div>
<div class="ops" style="left:1486px;top:862px;width:360px;height:35px"><span class="b" style="background:#a9a9a9">禁止登录</span><span class="b" style="background:#808000">查看流水</span><span class="b" style="background:#2e8b57">修改密码</span><span class="b" style="background:#0a3cb4">编辑</span><span class="b" style="background:#2d201f">删除</span><span class="b" style="background:#2e8b57">站内消息发送</span></div>
<div class="c ctr" style="left:221px;top:897px;width:171px;height:35px"><span class="num">20</span></div>
<div class="c l" style="left:392px;top:897px;width:187px;height:35px"><span>测试</span></div>
<div class="c l" style="left:579px;top:897px;width:170px;height:35px"><span class="num">17517517517</span></div>
<div class="c l" style="left:749px;top:897px;width:142px;height:35px"><span class="num">1000.00</span><span class="cz">充值</span></div>
<div class="c l" style="left:1032px;top:897px;width:142px;height:35px"><span>无</span></div>
<div class="c ctr" style="left:1174px;top:897px;width:141px;height:35px"><span>允许登录</span></div>
<div class="c ctr" style="left:1315px;top:897px;width:171px;height:35px"><span class="num">2020-05-27</span></div>
<div class="ops" style="left:1486px;top:897px;width:360px;height:35px"><span class="b" style="background:#a9a9a9">禁止登录</span><span class="b" style="background:#808000">查看流水</span><span class="b" style="background:#2e8b57">修改密码</span><span class="b" style="background:#0a3cb4">编辑</span><span class="b" style="background:#2d201f">删除</span><span class="b" style="background:#2e8b57">站内消息发送</span></div>
<div class="hl" style="top:172px"></div>
<div class="hl" style="top:207px"></div>
<div class="hl" style="top:242px"></div>
<div class="hl" style="top:296px"></div>
<div class="hl" style="top:331px"></div>
<div class="hl" style="top:367px"></div>
<div class="hl" style="top:402px"></div>
<div class="hl" style="top:437px"></div>
<div class="hl" style="top:473px"></div>
<div class="hl" style="top:508px"></div>
<div class="hl" style="top:543px"></div>
<div class="hl" style="top:579px"></div>
<div class="hl" style="top:614px"></div>
<div class="hl" style="top:650px"></div>
<div class="hl" style="top:685px"></div>
<div class="hl" style="top:720px"></div>
<div class="hl" style="top:756px"></div>
<div class="hl" style="top:791px"></div>
<div class="hl" style="top:826px"></div>
<div class="hl" style="top:862px"></div>
<div class="hl" style="top:897px"></div>
<div class="hl" style="top:932px"></div>
<div class="vl" style="left:221px;top:172px;height:768px"></div>
<div class="vl" style="left:392px;top:172px;height:768px"></div>
<div class="vl" style="left:579px;top:172px;height:768px"></div>
<div class="vl" style="left:749px;top:172px;height:768px"></div>
<div class="vl" style="left:891px;top:172px;height:768px"></div>
<div class="vl" style="left:1032px;top:172px;height:768px"></div>
<div class="vl" style="left:1174px;top:172px;height:768px"></div>
<div class="vl" style="left:1315px;top:172px;height:768px"></div>
<div class="vl" style="left:1486px;top:172px;height:768px"></div>
<div class="vl" style="left:1846px;top:172px;height:768px"></div>
<div class="abs" style="left:676px;top:373px;width:195px;height:30px;background:#fff"></div>
</body></html>
